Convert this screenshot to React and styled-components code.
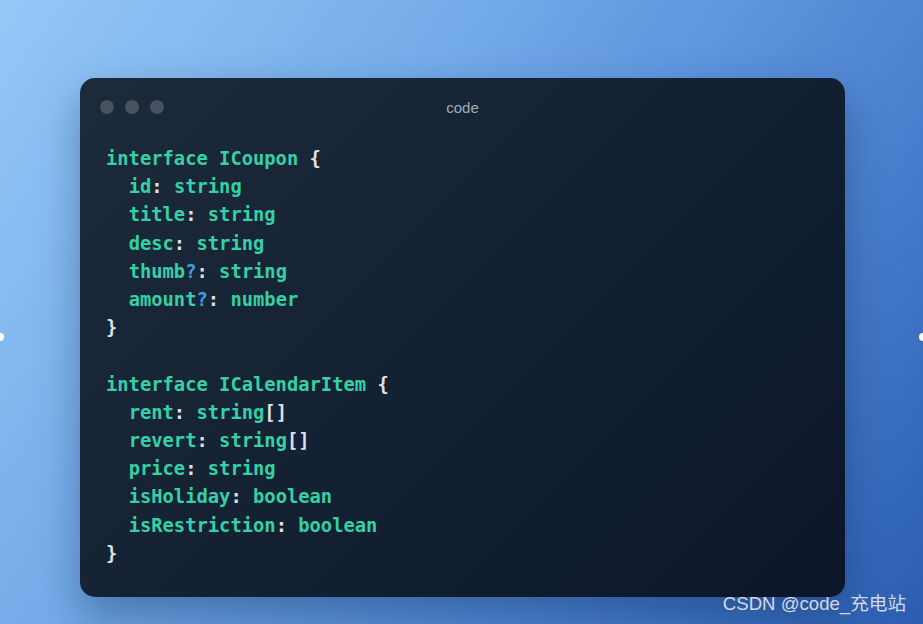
import React from "react"
import styled, { createGlobalStyle } from "styled-components"

const GlobalStyle = createGlobalStyle`
  html, body {
    margin: 0;
    padding: 0;
  }
  body {
    font-family: "Liberation Sans", Arial, sans-serif;
  }
`

// background stage
const Stage = styled.div`
  position: relative;
  width: 923px;
  height: 624px;
  overflow: hidden;
  box-sizing: border-box;
  padding: 78px 78px 27px 80px;
  display: flex;
  background: linear-gradient(125deg, #95c8f7 0%, #74abe9 35%, #4d84d2 70%, #2a5db0 100%);
`

const Window = styled.div`
  flex: 1;
  display: flex;
  flex-direction: column;
  border-radius: 15px;
  background: linear-gradient(135deg, #1d2a3a 0%, #142133 50%, #0b1729 100%);
  box-shadow: 0 18px 40px rgba(10, 30, 70, 0.35);
`

const TitleBar = styled.div`
  position: relative;
  height: 58px;
  display: flex;
  align-items: center;
  padding-left: 20px;
  gap: 11px;
`

const Dot = styled.span`
  width: 14px;
  height: 14px;
  border-radius: 50%;
  background: #485261;
`

const Title = styled.div`
  position: absolute;
  left: 0;
  right: 0;
  text-align: center;
  font-size: 15px;
  color: #a3abb5;
  pointer-events: none;
`

const Code = styled.pre`
  margin: 0;
  padding: 9px 26px 0;
  font-family: "DejaVu Sans Mono", "Liberation Mono", monospace;
  font-size: 18.8px;
  line-height: 28.2px;
  font-weight: bold;
  color: #34d1a6;
`

const Punct = styled.span`
  color: ${(p) => (p.q ? "#3c9fe4" : "#dde2e8")};
`

const Watermark = styled.div`
  position: absolute;
  right: 17px;
  bottom: 9px;
  font-family: "Liberation Sans", "Noto Sans CJK SC", sans-serif;
  font-size: 18.6px;
  color: #d2d9e3;
`

const EdgeDot = styled.span`
  position: absolute;
  top: 333px;
  ${(p) => (p.right ? "right: -4px;" : "left: -4px;")}
  width: 8px;
  height: 8px;
  border-radius: 50%;
  background: #ffffff;
`

const Field = ({ name, opt, type, arr }) => (
  <>
    {"  "}
    {name}
    {opt && <Punct q>?</Punct>}
    <Punct>:</Punct> {type}
    {arr && <Punct>[]</Punct>}
    {"\n"}
  </>
)

const App = () => (
  <Stage>
    <GlobalStyle />
    <Window>
      <TitleBar>
        <Dot />
        <Dot />
        <Dot />
        <Title>code</Title>
      </TitleBar>
      <Code>
        interface ICoupon <Punct>{"{"}</Punct>
        {"\n"}
        <Field name="id" type="string" />
        <Field name="title" type="string" />
        <Field name="desc" type="string" />
        <Field name="thumb" opt type="string" />
        <Field name="amount" opt type="number" />
        <Punct>{"}"}</Punct>
        {"\n\n"}
        interface ICalendarItem <Punct>{"{"}</Punct>
        {"\n"}
        <Field name="rent" type="string" arr />
        <Field name="revert" type="string" arr />
        <Field name="price" type="string" />
        <Field name="isHoliday" type="boolean" />
        <Field name="isRestriction" type="boolean" />
        <Punct>{"}"}</Punct>
      </Code>
    </Window>
    <EdgeDot />
    <EdgeDot right />
    <Watermark>CSDN @code_充电站</Watermark>
  </Stage>
)

export default App
